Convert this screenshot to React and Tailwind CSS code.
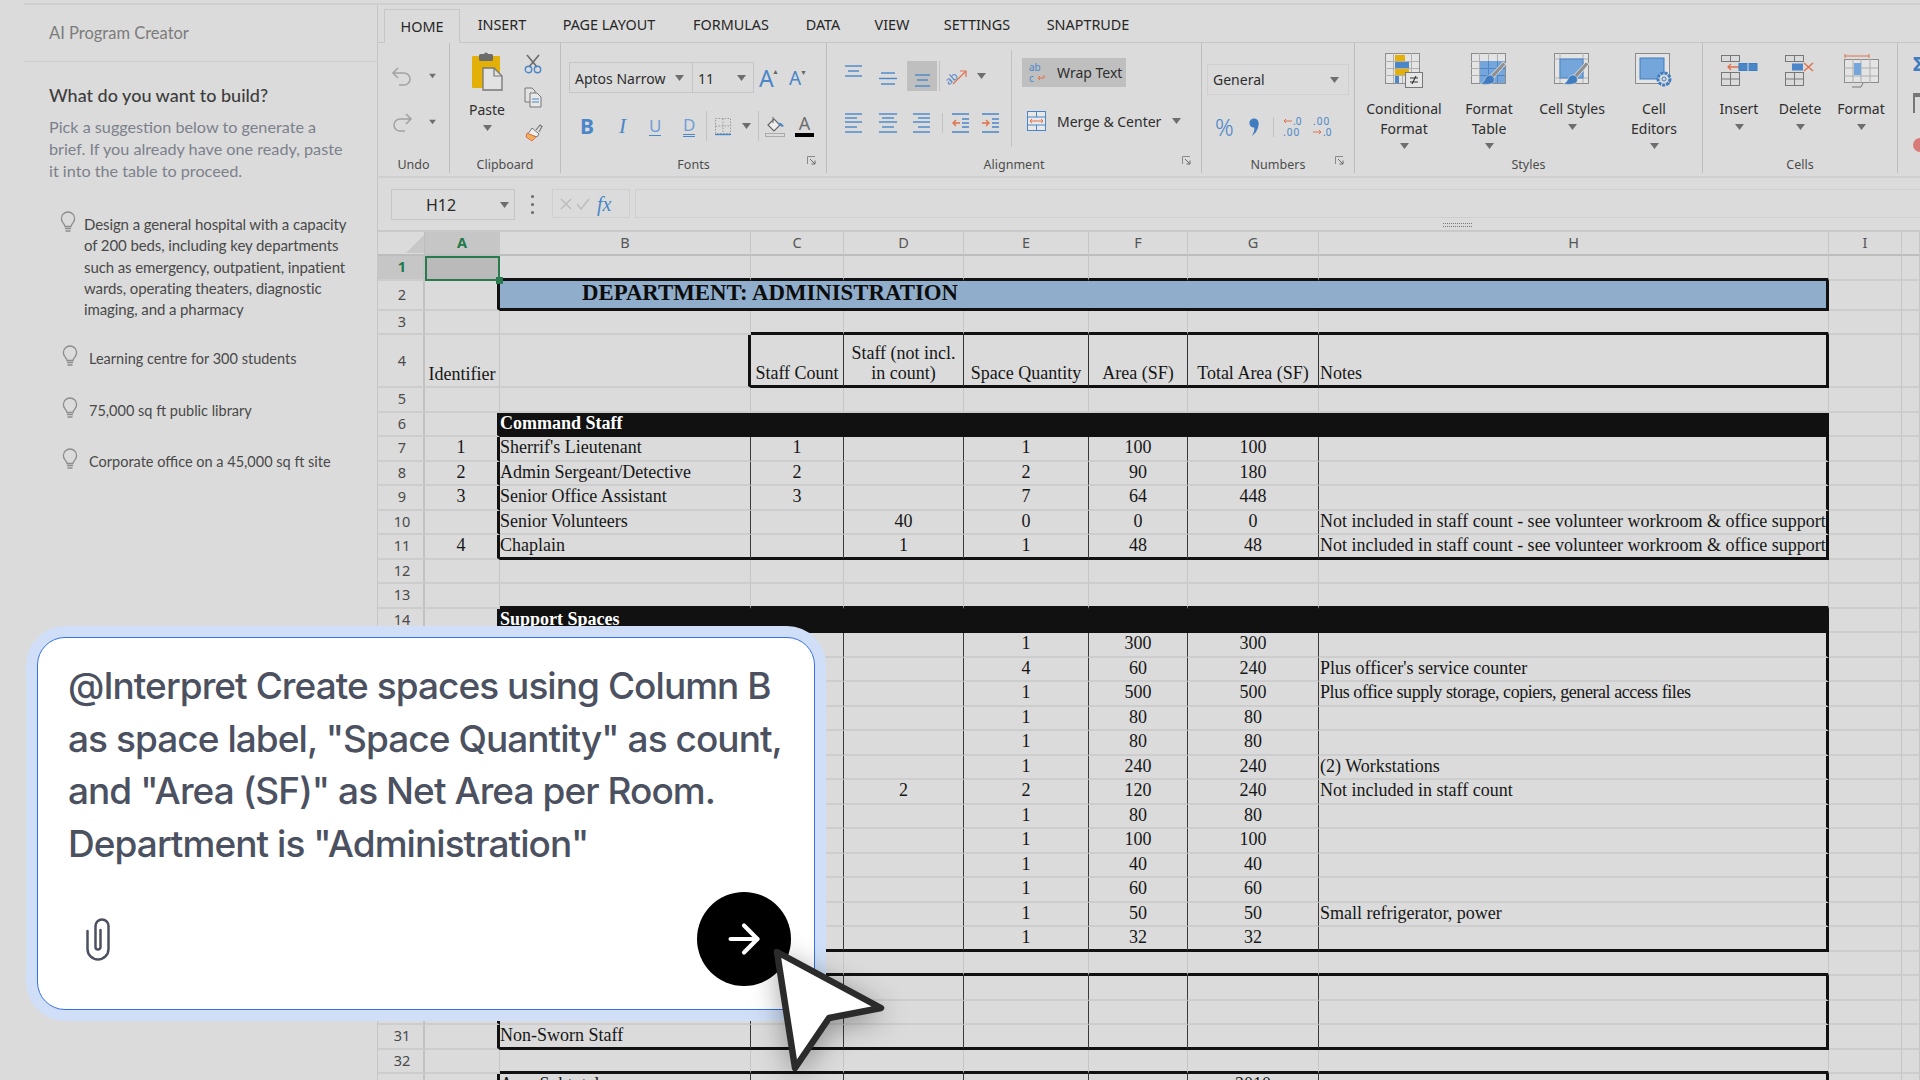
import React from "react";
import { ArrowRight } from "lucide-react";

const BL = "#4a86c8", LB = "#74a6dc", OR = "#e0704a", YE = "#e2b007", GR = "#8c8c8c";

const S = ({ w, h, cls = "", children }) => (
  <svg width={w} height={h} viewBox={`0 0 ${w} ${h}`} className={`block shrink-0 overflow-visible ${cls}`} fill="none">{children}</svg>
);

const Caret = ({ cls = "" }) => (
  <S w={9} h={6} cls={cls}><path d="M0 0h9L4.5 6z" fill="#6e6e6e" /></S>
);

const Launcher = () => (
  <S w={9} h={9} cls="absolute right-[10px] top-[0px]">
    <path d="M0.5 8V0.5H8" stroke="#8a8a8a" /><path d="M3 3l5 5M8 4.5V8H4.5" stroke="#6a6a6a" />
  </S>
);

const Sep = ({ cls = "" }) => <div className={`w-px shrink-0 bg-[#c2c2c2] ${cls}`} />;

const Group = ({ wCls, label, launcher, children }) => (
  <div className={`flex h-[130px] shrink-0 flex-col border-r border-[#bdbdbd] ${wCls}`}>
    <div className="flex-1">{children}</div>
    <div className="relative -mt-[1px] h-[17px] pt-[1px] text-center text-[12.5px] leading-[16px] text-[#4d4d4d]">
      {label}
      {launcher && <Launcher />}
    </div>
  </div>
);

const Lines = ({ w, h, rows, color = BL, cls = "" }) => (
  <S w={w} h={h} cls={cls}>
    {rows.map(([a, b, y], i) => (
      <line key={i} x1={a} x2={b} y1={y} y2={y} stroke={color} strokeWidth="1.4" />
    ))}
  </S>
);

const GridBase = () => (
  <>
    <rect x="0.5" y="0.5" width="34" height="30" fill="#e4e4e4" stroke={GR} />
    <path d="M0 8.5h34M0 15.5h34M0 22.5h34M8.5 0v30M17.5 0v30M26.5 0v30" stroke="#b0b0b0" />
  </>
);

const Brush = () => (
  <>
    <path d="M35 11L22 26l-3-3L32 9z" fill="#8f8f8f" stroke="#dbdbdb" />
    <path d="M20 22c3 1 4 4 3 7-2 2-6 3-14 2 3-1 4-3 5-5 1-3 3-4 6-4z" fill="#3f7cc0" stroke="#dbdbdb" strokeWidth=".6" />
  </>
);

const BigBtn = ({ wCls, icon, lines }) => (
  <div className={`flex shrink-0 flex-col items-center ${wCls}`}>
    <div className="mt-[10px] flex h-[35px] items-center justify-center">{icon}</div>
    <div className="mt-[11px] whitespace-nowrap text-center text-[14px] leading-[19.5px] text-[#2e2e2e]">
      {lines.map((l) => <div key={l}>{l}</div>)}
    </div>
    <Caret cls="mt-[5px]" />
  </div>
);

const Tab = ({ wCls, active, children }) => (
  <div
    className={`flex h-[34px] shrink-0 items-center justify-center text-[14.4px] text-[#262626] ${wCls} ${
      active ? "relative top-px border-x border-t border-[#c6c6c6] bg-[#dbdbdb]" : ""
    }`}
  >
    {children}
  </div>
);

const Ribbon = () => (
  <div className="flex h-[135px] border-b-2 border-[#cfcfcf] font-['Noto_Sans',sans-serif]">
    {/* Undo */}
    <Group wCls="w-[72px]" label="Undo">
      <div className="ml-[14px] mt-[24px] flex items-center">
        <S w={20} h={18}>
          <path d="M6 1L1 6l5 5M1 6h11a6 6 0 0 1 0 12H7" stroke="#a3a3a3" strokeWidth="1.6" />
        </S>
        <Caret cls="ml-[16px] scale-75" />
      </div>
      <div className="ml-[14px] mt-[28px] flex items-center">
        <S w={20} h={18}>
          <path d="M14 1l5 5-5 5M19 6H8a6 6 0 0 0 0 12h5" stroke="#a3a3a3" strokeWidth="1.6" />
        </S>
        <Caret cls="ml-[16px] scale-75" />
      </div>
    </Group>

    {/* Clipboard */}
    <Group wCls="w-[111px]" label="Clipboard">
      <div className="flex">
        <div className="ml-[15px] flex w-[44px] flex-col items-center">
          <S w={31} h={39} cls="mt-[9px]">
            <rect y="4" width="28" height="32" rx="1" fill={YE} />
            <rect x="7" y="2" width="14" height="7" rx="1.5" fill="#6b6b6b" />
            <circle cx="14" cy="2.5" r="2" fill="#6b6b6b" />
            <path d="M11 16h11l8 8v14H11z" fill="#e2e2e2" stroke="#777" strokeWidth="1.3" />
            <path d="M22 16v8h8" stroke="#777" strokeWidth="1.2" />
          </S>
          <div className="mt-[9px] text-[14px] leading-[20px] text-[#2e2e2e]">Paste</div>
          <Caret cls="mt-[5px]" />
        </div>
        <div className="ml-[15px] flex flex-col">
          <S w={18} h={19} cls="mt-[12px]">
            <path d="M3 0l10 12M15 0L5 12" stroke="#6b6b6b" strokeWidth="1.6" />
            <circle cx="4.5" cy="14.5" r="3.2" stroke={BL} strokeWidth="1.4" />
            <circle cx="13.500" cy="14.5" r="3.2" stroke={BL} strokeWidth="1.4" />
          </S>
          <S w={18} h={21} cls="mt-[13px]">
            <path d="M1 1h7l3 3v11H1z" fill="#e2e2e2" stroke="#777" />
            <path d="M6 6h7l4 4v10H6z" fill="#e8e8e8" stroke="#777" />
            <path d="M8 12h7M8 15h7" stroke={BL} />
          </S>
          <S w={19} h={19} cls="mt-[15px]">
            <path d="M12 7l4-5 2 1.5-3 5.5" stroke="#777" strokeWidth="1.2" />
            <path d="M8 5l7 6-2 3-9-3z" fill="#eee" stroke="#777" />
            <path d="M3 10l9 4-4 4-3-2-3-2z" fill="#f0b05a" stroke={OR} />
          </S>
        </div>
      </div>
    </Group>

    {/* Fonts */}
    <Group wCls="w-[266px]" label="Fonts" launcher>
      <div className="ml-[8px] mt-[19px] flex items-center">
        <div className="flex h-[31px] w-[124px] items-center justify-between border border-[#c6c6c6] pl-[5px] pr-[8px] pt-[1px] text-[14px] text-[#2e2e2e]">
          Aptos Narrow <Caret />
        </div>
        <div className="-ml-px flex h-[31px] w-[62px] items-center justify-between border border-[#c6c6c6] pl-[5px] pr-[7px] pt-[1px] text-[14px] text-[#2e2e2e]">
          11 <Caret />
        </div>
        <div className="relative ml-[5px] w-[19px] text-[23px] leading-[30px] text-[#4a86c8]">
          A<span className="absolute left-[13px] top-[4px] text-[7px] leading-[10px] text-[#666]">▲</span>
        </div>
        <div className="relative ml-[11px] w-[17px] text-[19px] leading-[30px] text-[#4a86c8]">
          A<span className="absolute left-[11px] top-[5px] text-[7px] leading-[10px] text-[#666]">▼</span>
        </div>
      </div>
      <div className="mt-[18px] flex h-[30px] items-center">
        <span className="ml-[19px] w-[13px] text-[21px] font-bold leading-none text-[#4a86c8]">B</span>
        <span className="ml-[26px] w-[8px] font-['Liberation_Serif',serif] text-[21px] italic leading-none text-[#4a86c8]">I</span>
        <span className="ml-[22px] w-[12px] border-b-[1.5px] border-[#4a86c8] text-[17px] leading-[18px] text-[#6f9fd6]">U</span>
        <span className="ml-[22px] w-[12px] border-b-[3px] border-double border-[#4a86c8] text-[17px] leading-[18px] text-[#6f9fd6]">D</span>
        <Sep cls="ml-[11px] h-[30px]" />
        <S w={16} h={17} cls="ml-[8px]">
          <path d="M.5.5h15v15H.5zM8 .5v15M.5 8h15" stroke="#9a9a9a" strokeDasharray="1.5 1.5" />
          <path d="M0 16.5h16" stroke={BL} strokeWidth="1.4" />
        </S>
        <Caret cls="ml-[11px]" />
        <Sep cls="ml-[7px] h-[30px]" />
        <S w={20} h={21} cls="ml-[6px]">
          <path d="M3 9l6-6 6 6-6 6z" fill="#eee" stroke="#666" strokeWidth="1.2" />
          <path d="M8 1v6" stroke="#666" />
          <path d="M12 7h4l3 3-2 1z" fill={BL} />
          <rect x=".5" y="17.5" width="19" height="3" stroke="#aaa" />
        </S>
        <div className="ml-[10px] flex w-[19px] flex-col items-center">
          <span className="text-[18px] leading-[17px] text-[#6e6e6e]">A</span>
          <span className="mt-[1px] block h-[4px] w-[19px] bg-black" />
        </div>
      </div>
    </Group>

    {/* Alignment */}
    <Group wCls="w-[375px]" label="Alignment" launcher>
      <div className="flex">
        <div className="w-[184px]">
          <div className="mt-[18px] flex h-[30px] items-center">
            <Lines w={17} h={12} cls="mb-[10px] ml-[18px]" rows={[[0, 17, 1], [3, 14, 6], [0, 17, 11]]} />
            <Lines w={18} h={13} cls="ml-[17px] mt-[4px]" rows={[[2, 16, 1], [0, 18, 6.5], [2, 16, 12]]} />
            <div className="ml-[10px] flex h-[30px] w-[30px] items-end justify-center bg-[#bfbfbf] pb-[4px]">
              <Lines w={17} h={13} rows={[[1, 16, 1], [3, 14, 6], [1, 16, 12]]} />
            </div>
            <Sep cls="ml-[2px] h-[30px]" />
            <S w={19} h={17} cls="ml-[7px]">
              <text x="-2" y="13" fontSize="11" fill={BL} transform="rotate(-40 6 10)" fontFamily="Noto Sans">ab</text>
              <path d="M6 16L18 4M13 3h6v6" stroke={OR} strokeWidth="1.2" />
            </S>
            <Caret cls="ml-[11px]" />
          </div>
          <div className="mt-[22px] flex h-[20px] items-center">
            <Lines w={17} h={20} cls="ml-[18px]" rows={[[0, 17, 1], [0, 12, 5], [0, 17, 9], [0, 12, 14], [0, 17, 19]]} />
            <Lines w={18} h={20} cls="ml-[17px]" rows={[[0, 18, 1], [3, 15, 5], [0, 18, 9], [3, 15, 14], [0, 18, 19]]} />
            <Lines w={17} h={20} cls="ml-[16px]" rows={[[0, 17, 1], [5, 17, 5], [0, 17, 9], [5, 17, 14], [0, 17, 19]]} />
            <Sep cls="ml-[12px] h-[20px]" />
            <S w={17} h={20} cls="ml-[9px]">
              <path d="M0 1h17M0 19h17M10 6h7M10 10h7M10 14h7" stroke={BL} strokeWidth="1.3" />
              <path d="M8 10H1M4 7l-3 3 3 3" stroke={OR} strokeWidth="1.3" />
            </S>
            <S w={17} h={20} cls="ml-[13px]">
              <path d="M0 1h17M0 19h17M10 6h7M10 10h7M10 14h7" stroke={BL} strokeWidth="1.3" />
              <path d="M0 10h7M4 7l3 3-3 3" stroke={OR} strokeWidth="1.3" />
            </S>
          </div>
        </div>
        <Sep cls="mt-[7px] h-[97px]" />
        <div className="ml-[10px] text-[14px] text-[#2e2e2e]">
          <div className="mt-[15px] flex h-[29px] w-[104px] items-center bg-[#bfbfbf]">
            <S w={17} h={20} cls="ml-[7px]">
              <text x="0" y="8" fontSize="10" fill={BL} fontFamily="Noto Sans">ab</text>
              <text x="0" y="19" fontSize="10" fill={BL} fontFamily="Noto Sans">c</text>
              <path d="M15 12v3H9M11 13l-2 2 2 2" stroke={OR} />
            </S>
            <span className="ml-[11px] whitespace-nowrap">Wrap Text</span>
          </div>
          <div className="ml-[5px] mt-[24px] flex h-[20px] items-center">
            <S w={19} h={20}>
              <rect x=".5" y=".5" width="18" height="19" fill="#e8e8e8" stroke={BL} />
              <path d="M0 6h19M0 14h19M9.5 0v6M9.5 14v6" stroke={BL} />
              <path d="M3 10h13M5 8l-2 2 2 2M14 8l2 2-2 2" stroke={OR} />
            </S>
            <span className="ml-[11px] whitespace-nowrap">Merge &amp; Center</span>
            <Caret cls="ml-[11px]" />
          </div>
        </div>
      </div>
    </Group>

    {/* Numbers */}
    <Group wCls="w-[153px]" label="Numbers" launcher>
      <div className="ml-[5px] mt-[21px] flex h-[31px] w-[142px] items-center justify-between border border-[#cfcfcf] pl-[5px] pr-[9px] text-[14px] text-[#2e2e2e]">
        General <Caret />
      </div>
      <div className="mt-[21px] flex h-[22px] items-center">
        <span className="ml-[13px] w-[20px] text-[23px] font-light leading-none text-[#4a86c8]">%</span>
        <S w={11} h={19} cls="ml-[14px]">
          <circle cx="5" cy="5" r="4.6" fill="#3f7cc0" />
          <path d="M9.5 5C10 10 7 15 3 18c2-4 3-7 2-9z" fill="#3f7cc0" />
        </S>
        <Sep cls="ml-[13px] h-[20px]" />
        <S w={19} h={20} cls="ml-[9px]">
          <path d="M9 4H1M3 2L1 4l2 2" stroke={OR} />
          <text x="10" y="8" fontSize="10" fill={BL} fontFamily="Noto Sans">.0</text>
          <text x="0" y="19" fontSize="10" fill={BL} fontFamily="Noto Sans" letterSpacing="1">.00</text>
        </S>
        <S w={19} h={20} cls="ml-[11px]">
          <text x="0" y="8" fontSize="10" fill={BL} fontFamily="Noto Sans" letterSpacing="1">.00</text>
          <path d="M0 15h8M6 13l2 2-2 2" stroke={OR} />
          <text x="10" y="19" fontSize="10" fill={BL} fontFamily="Noto Sans">.0</text>
        </S>
      </div>
    </Group>

    {/* Styles */}
    <Group wCls="w-[348px]" label="Styles">
      <div className="flex">
        <BigBtn wCls="w-[98px]" lines={["Conditional", "Format"]} icon={
          <S w={38} h={35}>
            <GridBase />
            <rect x="10" y="2" width="10" height="6" fill={YE} />
            <rect x="10" y="9" width="14" height="6" fill={BL} />
            <rect x="10" y="16" width="14" height="6" fill={YE} />
            <rect x="10" y="23" width="4" height="7" fill={BL} />
            <rect x="20.5" y="19.5" width="17" height="15" fill="#e6e6e6" stroke="#777" />
            <path d="M25 25h8M25 29h8M31 23l-4 8" stroke="#333" strokeWidth="1.1" />
          </S>
        } />
        <BigBtn wCls="w-[72px]" lines={["Format", "Table"]} icon={
          <S w={37} h={35}>
            <GridBase />
            <rect x="9" y="8" width="25" height="22" fill={LB} />
            <path d="M9 15.5h25M9 22.5h25M17.5 8v22M26.5 8v22" stroke="#4f86c6" />
            <Brush />
          </S>
        } />
        <BigBtn wCls="w-[94px]" lines={["Cell Styles"]} icon={
          <S w={37} h={35}>
            <rect x=".5" y=".5" width="34" height="30" fill="#e4e4e4" stroke={GR} />
            <path d="M6 0v30M0 6h34M0 25h34M29 0v30" stroke="#b0b0b0" />
            <rect x="6" y="6" width="23" height="19" fill={LB} stroke={BL} />
            <Brush />
          </S>
        } />
        <BigBtn wCls="w-[70px]" lines={["Cell", "Editors"]} icon={
          <S w={38} h={35}>
            <rect x=".5" y=".5" width="34" height="30" fill="#e4e4e4" stroke={GR} />
            <rect x="5" y="5" width="24" height="21" fill={LB} stroke="#3f7cc0" />
            <circle cx="29" cy="26" r="6" fill="#dbdbdb" stroke="#3f7cc0" strokeWidth="3" strokeDasharray="3 1" />
            <circle cx="29" cy="26" r="2" fill="#dbdbdb" stroke="#3f7cc0" />
          </S>
        } />
      </div>
    </Group>

    {/* Cells */}
    <Group wCls="w-[195px]" label="Cells">
      <div className="flex">
        <BigBtn wCls="w-[72px]" lines={["Insert"]} icon={
          <S w={37} h={31}>
            <rect x=".5" y=".5" width="18" height="6" stroke="#777" />
            <path d="M9.5 0v7" stroke="#777" />
            <rect x=".5" y="17.5" width="18" height="13" stroke="#777" />
            <path d="M9.5 17v14M0 24h19" stroke="#777" />
            <path d="M7 12H18M10 9l-3 3 3 3" stroke={OR} strokeWidth="1.3" />
            <rect x="18" y="8.5" width="18" height="7" fill={BL} stroke="#3f7cc0" />
            <path d="M27 8v8" stroke="#dbdbdb" />
          </S>
        } />
        <BigBtn wCls="w-[50px]" lines={["Delete"]} icon={
          <S w={31} h={31}>
            <rect x=".5" y=".5" width="18" height="6" stroke="#777" />
            <path d="M9.5 0v7" stroke="#777" />
            <rect x=".5" y="17.5" width="18" height="13" stroke="#777" />
            <path d="M9.5 17v14M0 24h19" stroke="#777" />
            <rect x="7" y="8.5" width="11" height="7" fill={BL} />
            <path d="M19 8l9 8M28 8l-9 8" stroke={OR} strokeWidth="1.4" />
          </S>
        } />
        <BigBtn wCls="w-[72px]" lines={["Format"]} icon={
          <S w={35} h={34}>
            <path d="M1 2h24M1 0v4M25 0v4" stroke={OR} />
            <rect x=".5" y="5.5" width="34" height="23" fill="#e4e4e4" stroke={GR} />
            <path d="M0 14h34M0 22h34M9 5v24M17 5v24M26 5v24" stroke="#aeaeae" />
            <rect x="10" y="9" width="7" height="12" fill={LB} />
            <path d="M8 33h9l2-4" stroke="#777" />
          </S>
        } />
      </div>
    </Group>

    {/* Partially visible group */}
    <div className="flex-1 overflow-hidden pl-[15px]">
      <div className="mt-[12px] text-[20px] font-bold leading-[18px] text-[#3f7cc0]">Σ</div>
      <div className="mt-[20px] h-[20px] w-[12px] border-l-2 border-t-4 border-[#777]" />
      <div className="mt-[25px] h-[14px] w-[14px] rounded-l-full bg-[#d97a7a]" />
    </div>
  </div>
);

const FormulaBar = () => (
  <div className="relative flex h-[52px] items-start pt-[11px] font-['Noto_Sans',sans-serif]">
    <div className="ml-[13px] flex h-[31px] w-[124px] items-center border border-[#c6c6c6] pl-[34px] pr-[5px] text-[16px] text-[#2a2a2a]">
      <span className="flex-1">H12</span>
      <Caret />
    </div>
    <div className="ml-[15px] flex h-[31px] w-[4px] flex-col items-center justify-center gap-[5px]">
      <span className="h-[3px] w-[3px] rounded-full bg-[#666]" />
      <span className="h-[3px] w-[3px] rounded-full bg-[#666]" />
      <span className="h-[3px] w-[3px] rounded-full bg-[#666]" />
    </div>
    <div className="ml-[18px] flex h-[29px] w-[78px] items-center border border-[#cfcfcf] pl-[7px]">
      <S w={12} h={12}><path d="M1 1l10 10M11 1L1 11" stroke="#bdbdbd" strokeWidth="1.5" /></S>
      <S w={14} h={12} cls="ml-[4px]"><path d="M1 6l4 5 8-10" stroke="#bdbdbd" strokeWidth="1.5" /></S>
      <span className="ml-[7px] font-['Liberation_Serif',serif] text-[20px] italic leading-none text-[#4a86c8]">fx</span>
    </div>
    <div className="ml-[5px] h-[29px] flex-1 border border-r-0 border-[#cfcfcf]" />
    <div className="absolute left-[1065px] top-[45px] h-[4px] w-[29px] border-y border-dotted border-[#777]" />
  </div>
);

const COLS = ["A", "B", "C", "D", "E", "F", "G", "H", "I", ""];
const NOTE = "Not included in staff count - see volunteer workroom & office support";
const SUPPLY = "Plus office supply storage, copiers, general access files";

const DATA = {
  4: ["Identifier", "", "Staff Count", "Staff (not incl.|in count)", "Space Quantity", "Area (SF)", "Total Area (SF)", "Notes"],
  7: ["1", "Sherrif's Lieutenant", "1", "", "1", "100", "100", ""],
  8: ["2", "Admin Sergeant/Detective", "2", "", "2", "90", "180", ""],
  9: ["3", "Senior Office Assistant", "3", "", "7", "64", "448", ""],
  10: ["", "Senior Volunteers", "", "40", "0", "0", "0", NOTE],
  11: ["4", "Chaplain", "", "1", "1", "48", "48", NOTE],
  15: ["", "", "", "", "1", "300", "300", ""],
  16: ["", "", "", "", "4", "60", "240", "Plus officer's service counter"],
  17: ["", "", "", "", "1", "500", "500", SUPPLY],
  18: ["", "", "", "", "1", "80", "80", ""],
  19: ["", "", "", "", "1", "80", "80", ""],
  20: ["", "", "", "", "1", "240", "240", "(2) Workstations"],
  21: ["", "", "", "2", "2", "120", "240", "Not included in staff count"],
  22: ["", "", "", "", "1", "80", "80", ""],
  23: ["", "", "", "", "1", "100", "100", ""],
  24: ["", "", "", "", "1", "40", "40", ""],
  25: ["", "", "", "", "1", "60", "60", ""],
  26: ["", "", "", "", "1", "50", "50", "Small refrigerator, power"],
  27: ["", "", "", "", "1", "32", "32", ""],
  31: ["", "Non-Sworn Staff", "", "", "", "", "", ""],
  33: ["", "Area Subtotal", "", "", "", "", "2010", ""],
};

const isBox = (r) => (r >= 7 && r <= 11) || (r >= 15 && r <= 27) || (r >= 29 && r <= 31) || r === 33;
const thickBelow = new Set([1, 2, 3, 4, 6, 11, 13, 14, 27, 28, 31, 32, 33]);

const rightClass = (r, c) => {
  const boxed = isBox(r);
  if (r === 4) {
    if (c === 2 || c === 8) return "border-r-[3px] border-r-[#111]";
    if (c >= 3 && c <= 7) return "border-r border-r-[#333]";
  }
  if (boxed) {
    if (c === 1 || c === 8) return "border-r-[3px] border-r-[#111]";
    if (c >= 2 && c <= 7) return "border-r border-r-[#3a3a3a]";
  }
  if ((r === 2 || r === 6 || r === 14) && c === 1) return "border-r-[3px] border-r-[#111]";
  return "border-r border-r-[#c6c6c6]";
};

const bottomClass = (r, c) => {
  const tableCol = r === 3 || r === 4 ? c >= 3 && c <= 8 : c >= 2 && c <= 8;
  if (thickBelow.has(r) && tableCol) return "border-b-[3px] border-b-[#111]";
  return "border-b-2 border-b-[#cdcdcd]";
};

const Bar = ({ children, blue }) => (
  <div
    className={`col-span-7 flex items-center whitespace-nowrap border-r-[3px] border-r-[#111] ${
      blue
        ? "border-b-[3px] border-b-[#111] bg-[#90aecb] pb-[1px] pl-[82px] text-[22.8px] font-bold text-[#0c0c0c]"
        : "bg-[#111] pb-[2px] text-[18px] font-bold text-white"
    }`}
  >
    {children}
  </div>
);

const Sheet = () => {
  const rows = [];
  for (let r = 1; r <= 33; r++) {
    const sel = r === 1;
    const hidden = r >= 15 && r <= 30;
    rows.push(
      <div
        key={`h${r}`}
        className={`flex items-center justify-center border-b-2 border-r-2 border-b-[#cdcdcd] border-r-[#c2c2c2] pl-[3px] font-['Noto_Sans',sans-serif] text-[14.5px] ${
          sel ? "bg-[#c6c6c6] font-bold text-[#1f7a4d]" : "text-[#4a4a4a]"
        }`}
      >
        {hidden ? "" : r}
      </div>
    );
    for (let c = 1; c <= 10; c++) {
      if ((r === 2 || r === 6 || r === 14) && c === 2) {
        rows.push(
          <Bar key={`b${r}`} blue={r === 2}>
            {r === 2 ? "DEPARTMENT: ADMINISTRATION" : r === 6 ? "Command Staff" : "Support Spaces"}
          </Bar>
        );
        c = 8;
        continue;
      }
      const val = DATA[r] && c <= 8 ? DATA[r][c - 1] : "";
      const leftAlign = c === 2 || c === 8;
      const cls = `flex whitespace-nowrap ${rightClass(r, c)} ${bottomClass(r, c)} ${
        r === 4 ? "flex-col justify-end pb-[2px]" : "flex-row items-center pb-[2px]"
      } ${c === 8 ? "pl-[1px]" : ""} ${leftAlign ? "" : r === 4 ? "items-center text-center" : "justify-center"}`;
      if (sel && c === 1) {
        rows.push(
          <div key="a1" className="relative border-2 border-[#2a7a50] bg-[#bababa]">
            <span className="absolute -bottom-[5px] -right-[5px] h-[7px] w-[7px] bg-[#2a7a50]" />
          </div>
        );
        continue;
      }
      rows.push(
        <div key={`${r}-${c}`} className={cls}>
          {val && val.split("|").map((t) => (
            <span key={t} className={t === SUPPLY ? "leading-[20px] tracking-[-0.43px]" : "leading-[20px]"}>{t}</span>
          ))}
        </div>
      );
    }
  }
  return (
    <div className="grid grid-cols-[47px_75px_251px_93px_120px_125px_99px_131px_510px_73px_1fr] grid-rows-[24px_24.5px_30px_24.5px_53px_repeat(29,24.5px)] border-t-2 border-[#c9c9c9] font-['Liberation_Serif',serif] text-[18px] text-[#161616]">
      <div className="relative border-b-2 border-r border-[#bdbdbd]">
        <S w={18} h={18} cls="absolute left-[28px] top-[3px]"><path d="M18 0v18H0z" fill="#c8c8c8" /></S>
      </div>
      {COLS.map((h, i) => (
        <div
          key={i}
          className={`flex items-center justify-center border-b-2 border-r border-b-[#bdbdbd] border-r-[#c6c6c6] font-['Noto_Sans',sans-serif] text-[14.5px] ${
            i === 0 ? "bg-[#c6c6c6] font-bold text-[#1f7a4d]" : "text-[#555]"
          }`}
        >
          {h}
        </div>
      ))}
      {rows}
    </div>
  );
};

const Bulb = ({ cls = "" }) => (
  <S w={16} h={20} cls={cls}>
    <path d="M5 13.5c0-1.6-.9-2.4-2-3.6A6.6 6.6 0 1 1 13 9.9c-1.1 1.2-2 2-2 3.6z" stroke="#8d8d8d" strokeWidth="1.3" />
    <path d="M5 15.5h6M5.5 18h5" stroke="#8d8d8d" strokeWidth="1.4" />
  </S>
);

const Suggestion = ({ top, left, textLeft, children }) => (
  <div className={`flex items-start ${top} ${left}`}>
    <Bulb />
    <p className={`leading-[21.3px] text-[#494949] ${textLeft}`}>{children}</p>
  </div>
);

const Sidebar = () => (
  <aside className="w-[378px] shrink-0 border-r border-[#c6c6c6] pl-[24px] font-['Lato',sans-serif]">
    <div className="flex h-[57px] items-center border-b border-[#cecece] pl-[25px] text-[16.5px] text-[#7c7c7c]">
      AI Program Creator
    </div>
    <h2 className="ml-[25px] mt-[20px] text-[18px] font-medium leading-[26px] text-[#3d3d3d]">What do you want to build?</h2>
    <p className="ml-[25px] mt-[8px] w-[304px] text-[16.2px] leading-[22px] text-[#7c818c]">
      Pick a suggestion below to generate a brief. If you already have one ready, paste it into the table to proceed.
    </p>
    <Suggestion top="mt-[31px]" left="ml-[36px]" textLeft="ml-[8px] mt-[1px] w-[268px] text-[15px] tracking-[-0.1px]">
      Design a general hospital with a capacity of 200 beds, including key departments such as emergency, outpatient, inpatient wards, operating theaters, diagnostic imaging, and a pharmacy
    </Suggestion>
    <Suggestion top="mt-[27px]" left="ml-[38px]" textLeft="ml-[11px] mt-[1px] text-[14.5px]">Learning centre for 300 students</Suggestion>
    <Suggestion top="mt-[29px]" left="ml-[38px]" textLeft="ml-[11px] mt-[1px] text-[14.5px]">75,000 sq ft public library</Suggestion>
    <Suggestion top="mt-[29px]" left="ml-[38px]" textLeft="ml-[11px] mt-[1px] text-[14.5px]">Corporate office on a 45,000 sq ft site</Suggestion>
  </aside>
);

const Prompt = () => (
  <div className="absolute left-[37px] top-[637px] flex h-[373px] w-[778px] flex-col rounded-[28px] border-[1.5px] border-[#3572e6] bg-white pb-[23px] pl-[30px] pr-[23px] pt-[22px] font-['Inter',sans-serif] shadow-[0_0_0_11px_#d0dff7]">
    <p className="w-[730px] text-[37px] font-[450] leading-[52.7px] tracking-[-0.95px] text-[#4b5160]">
      @Interpret Create spaces using Column B as space label, "Space Quantity" as count, and "Area (SF)" as Net Area per Room. Department is "Administration"
    </p>
    <div className="mt-auto flex items-center justify-between">
      <S w={26} h={45} cls="ml-[17px]">
        <path
          d="M2.500 14V32a10.500 10.500 0 0 0 21 0V9a6.500 6.500 0 0 0-13 0V30a2.500 2.500 0 0 0 5 0V13"
          stroke="#4b5160"
          strokeWidth="2.500"
          strokeLinecap="round"
        />
      </S>
      <div className="flex h-[94px] w-[94px] items-center justify-center rounded-full bg-black">
        <ArrowRight color="white" size={46} strokeWidth={2.2} />
      </div>
    </div>
  </div>
);

const Cursor = () => (
  <S w={140} h={150} cls="absolute left-[765px] top-[940px] drop-shadow-[0_6px_14px_rgba(0,0,0,0.35)]">
    <path d="M12 12L116 68L64 78L30 128Z" fill="white" stroke="#2b2b2b" strokeWidth="6.500" strokeLinejoin="round" />
  </S>
);

export default function App() {
  return (
    <div className="relative h-[1080px] w-[1920px] overflow-hidden bg-[#dbdbdb]">
      <div className="h-[5px] pt-[3px]">
        <div className="ml-[24px] h-[2px] bg-[#cfcfcf]" />
      </div>
      <div className="flex h-[1075px]">
        <Sidebar />
        <main className="min-w-0 flex-1">
          <div className="flex h-[38px] items-end border-b border-[#c6c6c6] pl-[6px] font-['Noto_Sans',sans-serif]">
            <Tab wCls="w-[76px]" active>HOME</Tab>
            <Tab wCls="w-[84px]">INSERT</Tab>
            <Tab wCls="w-[130px]">PAGE LAYOUT</Tab>
            <Tab wCls="w-[114px]">FORMULAS</Tab>
            <Tab wCls="w-[70px]">DATA</Tab>
            <Tab wCls="w-[68px]">VIEW</Tab>
            <Tab wCls="w-[102px]">SETTINGS</Tab>
            <Tab wCls="w-[120px]">SNAPTRUDE</Tab>
          </div>
          <Ribbon />
          <FormulaBar />
          <Sheet />
        </main>
      </div>
      <Prompt />
      <Cursor />
    </div>
  );
}
